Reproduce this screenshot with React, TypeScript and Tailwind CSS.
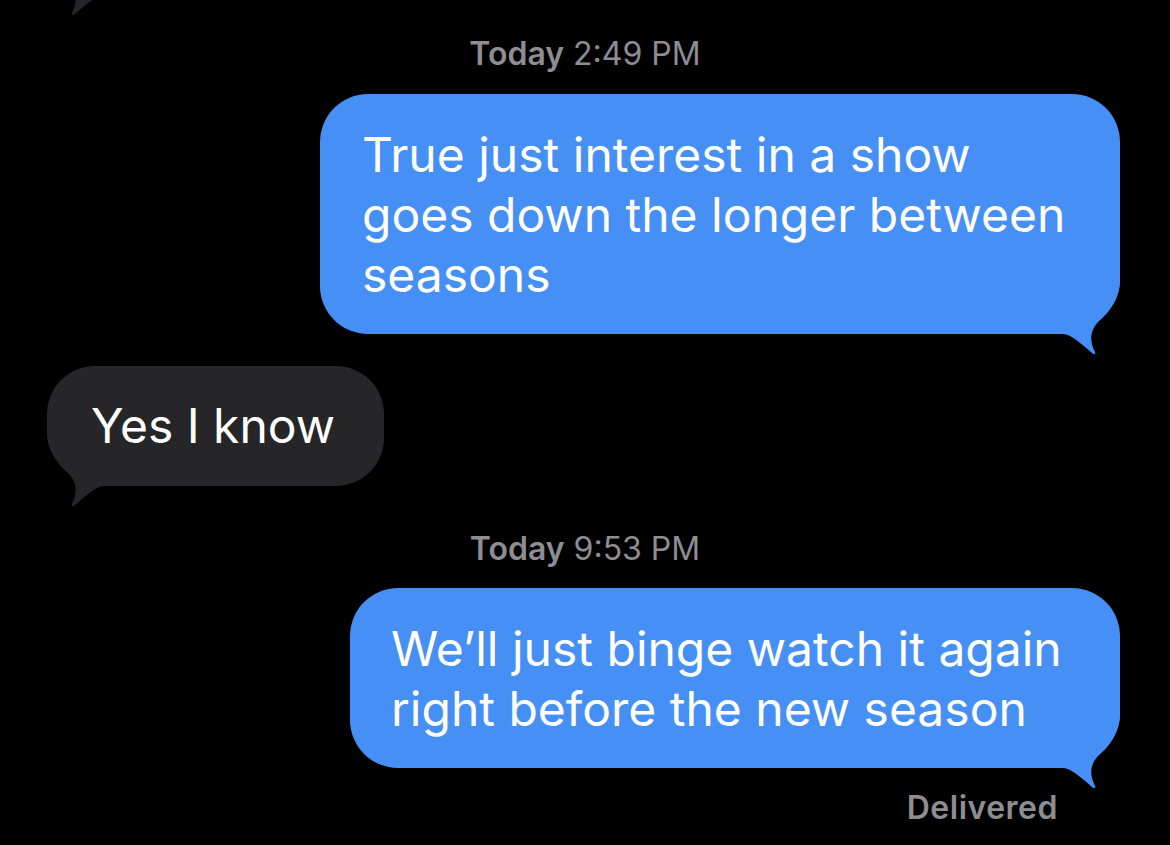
const font = { fontFamily: "Inter, 'Noto Sans', sans-serif" };

function Tail({ color, flip = false }: { color: string; flip?: boolean }) {
  return (
    <svg
      width="72"
      height="76"
      viewBox="0 0 72 76"
      className={flip ? "absolute left-[-2px] bottom-[-22px]" : "absolute right-[-2px] bottom-[-22px]"}
    >
      <g transform={flip ? "translate(72 0) scale(-1 1)" : undefined}>
        <path
          d="M0 54 L12 54 C20 54 26 60 34 66 L42 73 C44.5 75 46 74 45 72 C40 62 39 52 48 42 C60 32 70 18 70 0 L0 0 Z"
          fill={color}
        />
      </g>
    </svg>
  );
}

function Stamp({ day, time }: { day: string; time: string }) {
  return (
    <div className="text-center text-[32px] leading-[36px] text-[#8d8d92]">
      <span className="font-semibold">{day}</span> <span>{time}</span>
    </div>
  );
}

export default function App() {
  return (
    <div className="relative h-[845px] w-[1170px] overflow-hidden bg-black" style={font}>
      <div className="flex flex-col">
        {/* previous incoming bubble, cut off at the top */}
        <div className="relative ml-[47px] mt-[-125px] h-[120px] w-[300px] rounded-[48px] rounded-bl-[70px_54px] bg-[#262628]">
          <Tail color="#262628" flip />
        </div>

        <div className="mt-[41px]">
          <Stamp day="Today" time="2:49 PM" />
        </div>

        <div className="relative ml-auto mr-[50px] mt-[22px] w-[800px] rounded-[48px] rounded-br-[70px_54px] bg-[#4690f5] pl-[42px] pt-[31px] pb-[29px] text-[48px] leading-[60px] text-white whitespace-nowrap">
          <Tail color="#4690f5" />
          <p className="relative">
            True just interest in a show
            <br />
            goes down the longer between
            <br />
            seasons
          </p>
        </div>

        <div className="relative ml-[47px] mt-[32px] w-[337px] rounded-[48px] rounded-bl-[70px_54px] bg-[#262628] pl-[44px] py-[30px] text-[48px] leading-[60px] text-white whitespace-nowrap">
          <Tail color="#262628" flip />
          <p className="relative">Yes I know</p>
        </div>

        <div className="mt-[45px]">
          <Stamp day="Today" time="9:53 PM" />
        </div>

        <div className="relative ml-auto mr-[50px] mt-[21px] w-[770px] rounded-[48px] rounded-br-[70px_54px] bg-[#4690f5] pl-[41px] pt-[31px] pb-[29px] text-[48px] leading-[60px] text-white whitespace-nowrap">
          <Tail color="#4690f5" />
          <p className="relative">
            We’ll just binge watch it again
            <br />
            right before the new season
          </p>
        </div>

        <div className="mr-[112px] mt-[22px] text-right text-[32px] font-semibold leading-[36px] tracking-[0.5px] text-[#8d8d92]">
          Delivered
        </div>
      </div>
    </div>
  );
}
